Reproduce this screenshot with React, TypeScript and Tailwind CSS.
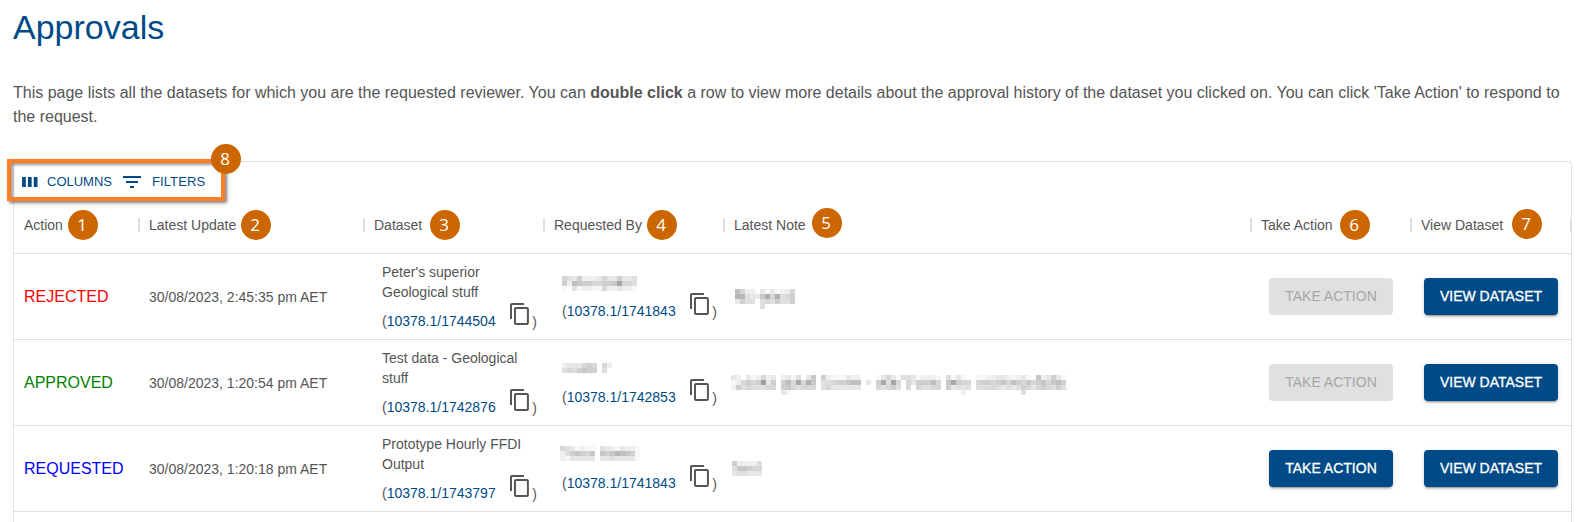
import React from "react";

function Badge({ n, className }: { n: number; className: string }) {
  return (
    <span
      className={`absolute flex size-[30px] items-center justify-center rounded-full bg-[#cc6600] pb-px pr-[2px] font-['Open_Sans',sans-serif] text-[17px] leading-none text-white ${className}`}
    >
      {n}
    </span>
  );
}

function CopyIcon() {
  return (
    <svg viewBox="0 0 24 24" className="size-6 fill-[#555]">
      <path d="M16 1H4c-1.1 0-2 .9-2 2v14h2V3h12V1zm3 4H8c-1.1 0-2 .9-2 2v14c0 1.1.9 2 2 2h11c1.100 0 2-.9 2-2V7c0-1.100-.9-2-2-2zm0 16H8V7h11v14z" />
    </svg>
  );
}

/* Each character is the darkness of one 5px cell, from 1 to f; a space is an empty cell. */
function Redacted({ cells, className }: { cells: string[]; className: string }) {
  return (
    <svg
      width={cells[0].length * 5}
      height={cells.length * 5}
      shapeRendering="crispEdges"
      className={`block shrink-0 ${className}`}
    >
      {cells.flatMap((row, y) =>
        row.split("").map((c, x) => {
          const v = 255 - (parseInt(c, 16) || 0) * 8;
          return <rect key={`${x}-${y}`} x={x * 5} y={y * 5} width={5} height={5} fill={`rgb(${v},${v},${v})`} />;
        })
      )}
    </svg>
  );
}

const headers = [
  { label: "Action", n: 1, pos: "left-[54px] top-[13px]" },
  { label: "Latest Update", n: 2, pos: "left-[102px] top-[13px]" },
  { label: "Dataset", n: 3, pos: "left-[66px] top-[13px]" },
  { label: "Requested By", n: 4, pos: "left-[103px] top-[13px]" },
  { label: "Latest Note", n: 5, pos: "left-[88px] top-[11px]" },
  { label: "Take Action", n: 6, pos: "left-[89px] top-[13px]" },
  { label: "View Dataset", n: 7, pos: "left-[101px] top-[12px]" },
];

const rows = [
  {
    action: "REJECTED",
    color: "text-[#ff0000]",
    date: "30/08/2023, 2:45:35 pm AET",
    title: "Peter's superior Geological stuff",
    id: "10378.1/1744504",
    name: ["543622235336334", "628766556" + "67b554", "104122115223221"],
    namePos: "mt-[22px]",
    by: "10378.1/1741843",
    note: ["852203131225", "994337a5a456", "364404546446", "     4      "],
    notePos: "ml-[1px] mt-[35px]",
    enabled: false,
  },
  {
    action: "APPROVED",
    color: "text-[#008000]",
    date: "30/08/2023, 1:20:54 pm AET",
    title: "Test data - Geological stuff",
    id: "10378.1/1742876",
    name: ["2333565 52", "4546766 40"],
    namePos: "mt-[23px]",
    by: "10378.1/1742853",
    note: [
      "320312523 2314037 62111322   1353144312221 41310 112233212310723631 ",
      "125656c36 685b5a7 44566788 3 6b4b505366685 7b655 566567586575675786 ",
      "264544455 6754555 45333333   5456405054455 63434 4445434346535654641",
      "          31                                  2           4         ",
    ],
    notePos: "-ml-[3px] mt-[35px]",
    enabled: false,
  },
  {
    action: "REQUESTED",
    color: "text-[#0000ff]",
    date: "30/08/2023, 1:20:18 pm AET",
    title: "Prototype Hourly FFDI Output",
    id: "10378.1/1743797",
    name: ["5431211 43213221", "2467657 76798761", "2133333 33433331"],
    namePos: "-ml-[2px] mt-[20px]",
    by: "10378.1/1741843",
    note: ["622224", "477655", "344333"],
    notePos: "-ml-[2px] mt-[35px]",
    enabled: true,
  },
];

const grid = "grid grid-cols-[125px_225px_180px_180px_1fr_160px_160px]";

function Identifier({ id }: { id: string }) {
  return (
    <div className="flex h-[38px] w-[155px] whitespace-nowrap leading-[20px]">
      <span className="w-[127px] pt-[9px]">
        (<span className="text-[#004b87]">{id}</span>
      </span>
      <CopyIcon />
      <span className="pt-[10px]">)</span>
    </div>
  );
}

function ActionButton({ children, enabled, width }: { children: React.ReactNode; enabled: boolean; width: string }) {
  return (
    <button
      className={`mt-[24px] h-[37px] rounded-[4px] pb-[2px] text-[14px] leading-[24px] ${width} ${
        enabled
          ? "bg-[#004b87] text-white shadow-[0px_3px_1px_-2px_rgba(0,0,0,0.2),0px_2px_2px_0px_rgba(0,0,0,0.14),0px_1px_5px_0px_rgba(0,0,0,0.12)] [-webkit-text-stroke:0.3px_white]"
          : "bg-[#e0e0e0] text-[#a6a6a6]"
      }`}
    >
      {children}
    </button>
  );
}

export default function App() {
  return (
    <div className="h-[522px] overflow-hidden bg-white pl-[13px] font-['Liberation_Sans',Arial,sans-serif] text-[#555]">
      <h1 className="pt-[6px] text-[34px] leading-[42px] text-[#004b87]">Approvals</h1>
      <p className="mt-[33px] w-[1560px] text-[16px] leading-[24px]">
        This page lists all the datasets for which you are the requested reviewer. You can <b>double click</b> a row to
        view more details about the approval history of the dataset you clicked on. You can click 'Take Action' to
        respond to the request.
      </p>

      <div className="relative mt-[32px] h-[400px] w-[1559px] rounded-[4px] border border-[#e0e0e0] text-[14px]">
        <div className="flex h-[34px] items-center pl-[6px] pt-[5px] text-[13px] text-[#004b87]">
          <svg viewBox="0 0 24 24" className="size-[20px] fill-current">
            <path d="M2.500 6h4.500v12H2.500zM9.500 6H14v12H9.500zM16.500 6H21v12h-4.500z" />
          </svg>
          <span className="ml-[7px] w-[76px]">COLUMNS</span>
          <svg viewBox="0 0 18 12" className="h-[12px] w-[18px] fill-current">
            <path d="M0 0h18v2H0zM3 5h12v2H3zM7 10h4v2H7z" />
          </svg>
          <span className="ml-[11px] tracking-[0.1px]">FILTERS</span>
        </div>
        <div className="absolute -left-[7px] -top-[3px] h-[42px] w-[218px] border-4 border-[#ff7f27] shadow-[2px_2px_3px_rgba(0,0,0,0.5),inset_2px_2px_3px_rgba(0,0,0,0.4)]" />
        <Badge n={8} className="left-[197px] top-[-18px]" />

        <div className={`${grid} mt-[1px] h-[57px] border-b border-[#e0e0e0]`}>
          {headers.map((h) => (
            <div key={h.n} className="relative flex items-center justify-between pl-[10px]">
              <span>{h.label}</span>
              <span className="-mr-px h-[14px] w-[2px] bg-[#e0e0e0]" />
              <Badge n={h.n} className={h.pos} />
            </div>
          ))}
        </div>

        {rows.map((r) => (
          <div key={r.id} className={`${grid} h-[86px] border-b border-[#e0e0e0]`}>
            <div className={`pl-[10px] pt-[31px] text-[16px] leading-[24px] ${r.color}`}>{r.action}</div>
            <div className="pl-[10px] pt-[33px] leading-[20px]">{r.date}</div>
            <div className="pl-[18px] pt-[8px]">
              <div className="w-[150px] leading-[20px]">{r.title}</div>
              <Identifier id={r.id} />
            </div>
            <div className="pl-[18px]">
              <div className="flex h-[38px]">
                <Redacted cells={r.name} className={r.namePos} />
              </div>
              <Identifier id={r.by} />
            </div>
            <div className="flex items-start pl-[10px]">
              <Redacted cells={r.note} className={r.notePos} />
            </div>
            <div className="pl-[18px]">
              <ActionButton enabled={r.enabled} width="w-[124px]">
                TAKE ACTION
              </ActionButton>
            </div>
            <div className="pl-[13px]">
              <ActionButton enabled width="w-[134px]">
                VIEW DATASET
              </ActionButton>
            </div>
          </div>
        ))}
      </div>
    </div>
  );
}
